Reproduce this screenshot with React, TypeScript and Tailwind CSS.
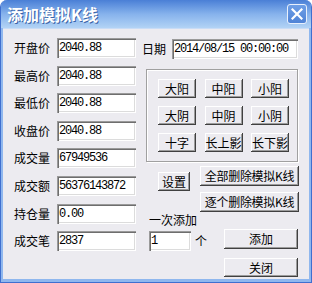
const cjk = "font-['Noto_Sans_CJK_SC','Noto_Sans',sans-serif]";
const mono = "font-['Liberation_Mono','Noto_Sans_CJK_SC',monospace]";

const sunken =
  "bg-white shadow-[inset_1px_1px_0_#9a9a9a,inset_2px_2px_0_#6e6e6e,inset_-1px_-1px_0_#ffffff,inset_-2px_-2px_0_#dcdcdc]";
const raised =
  "bg-[#ecebf0] shadow-[inset_-1px_-1px_0_#404040,inset_1px_1px_0_#ffffff,inset_-2px_-2px_0_#9c9c9c]";

function Field({ value, className = "" }: { value: string; className?: string }) {
  return (
    <div
      className={`${sunken} ${mono} h-[20px] pl-[2px] flex items-center text-[12px] tracking-[-1.2px] text-black ${className}`}
    >
      {value}
    </div>
  );
}

function Btn({ label, className = "" }: { label: string; className?: string }) {
  return (
    <div
      className={`${raised} ${cjk} flex items-center justify-center text-[12px] leading-none text-black ${className}`}
    >
      {label}
    </div>
  );
}

const rows: [string, string][] = [
  ["开盘价", "2040.88"],
  ["最高价", "2040.88"],
  ["最低价", "2040.88"],
  ["收盘价", "2040.88"],
  ["成交量", "67949536"],
  ["成交额", "56376143872"],
  ["持仓量", "0.00"],
  ["成交笔", "2837"],
];

const shapes = ["大阳", "中阳", "小阳", "大阴", "中阴", "小阴", "十字", "长上影", "长下影"];

export default function App() {
  return (
    <div className="w-[312px] h-[283px] flex flex-col rounded-t-[7px] bg-[#8fb7ee] border-x border-b border-[#3f6fcf] overflow-hidden">
      {/* Title bar */}
      <div className="h-[28px] flex items-center justify-between bg-gradient-to-b from-[#4a7fd6] via-[#86b2ec] to-[#b2d3f5] pl-[6px] pr-[4px]">
        <span
          className={`${cjk} text-[16px] font-bold text-white leading-none [text-shadow:1px_1px_0_#3a64a8]`}
        >
          添加模拟K线
        </span>
        <div className="w-[20px] h-[20px] rounded-[3px] border border-[#e8f0fc] bg-gradient-to-b from-[#6f9fe6] to-[#4f83d6] flex items-center justify-center">
          <svg width="12" height="12" viewBox="0 0 12 12">
            <path d="M1.5 1.5 L10.5 10.5 M10.5 1.5 L1.5 10.5" stroke="#fff" strokeWidth="2.2" strokeLinecap="square" />
          </svg>
        </div>
      </div>

      {/* Client */}
      <div className="flex-1 mx-[2px] mb-[3px] border-t border-[#c9dcf6] bg-[#ecebf0] flex text-black">
        {/* Left column */}
        <div className="grid grid-cols-[43px_79px] gap-y-[7.6px] pl-[11px] pt-[9px] content-start">
          {rows.map(([label, value]) => (
            <div key={label} className="contents">
              <div className={`${cjk} text-[12px] h-[20px] flex items-center`}>{label}</div>
              <Field value={value} />
            </div>
          ))}
        </div>

        {/* Right column */}
        <div className="ml-[6px] flex flex-col">
          <div className="mt-[10px] flex items-center h-[20px]">
            <span className={`${cjk} text-[12px] w-[30px]`}>日期</span>
            <Field value="2014/08/15 00:00:00" className="w-[126px]" />
          </div>

          <div className="ml-[4px] mt-[10px] w-[152px] h-[93px] border border-[#a0a0a0] shadow-[1px_1px_0_#ffffff,inset_1px_1px_0_#ffffff]">
            <div className="grid grid-cols-[38px_38px_38px] gap-x-[8.5px] gap-y-[8px] pl-[11px] pt-[9px]">
              {shapes.map((s) => (
                <Btn key={s} label={s} className="h-[19px]" />
              ))}
            </div>
          </div>

          <div className="mt-[4px] flex items-start">
            <Btn label="设置" className="ml-[16px] mt-[6px] w-[32px] h-[19px]" />
            <div className="ml-[10px] flex flex-col gap-[6px]">
              <Btn label="全部删除模拟K线" className="w-[99px] h-[20px] tracking-[-0.3px]" />
              <Btn label="逐个删除模拟K线" className="w-[99px] h-[20px] tracking-[-0.3px]" />
            </div>
          </div>

          <div className={`${cjk} ml-[7px] h-[16px] text-[12px] leading-[16px]`}>一次添加</div>

          <div className="flex items-start">
            <Field value="1" className="ml-[7px] mt-[3px] w-[42px]" />
            <span className={`${cjk} ml-[4px] mt-[5px] w-[12px] text-[12px] leading-[16px]`}>个</span>
            <Btn label="添加" className="ml-[17px] mt-[1px] w-[74px] h-[20px]" />
          </div>

          <Btn label="关闭" className="ml-[82px] mt-[7px] w-[74px] h-[19px]" />
        </div>
      </div>
    </div>
  );
}
